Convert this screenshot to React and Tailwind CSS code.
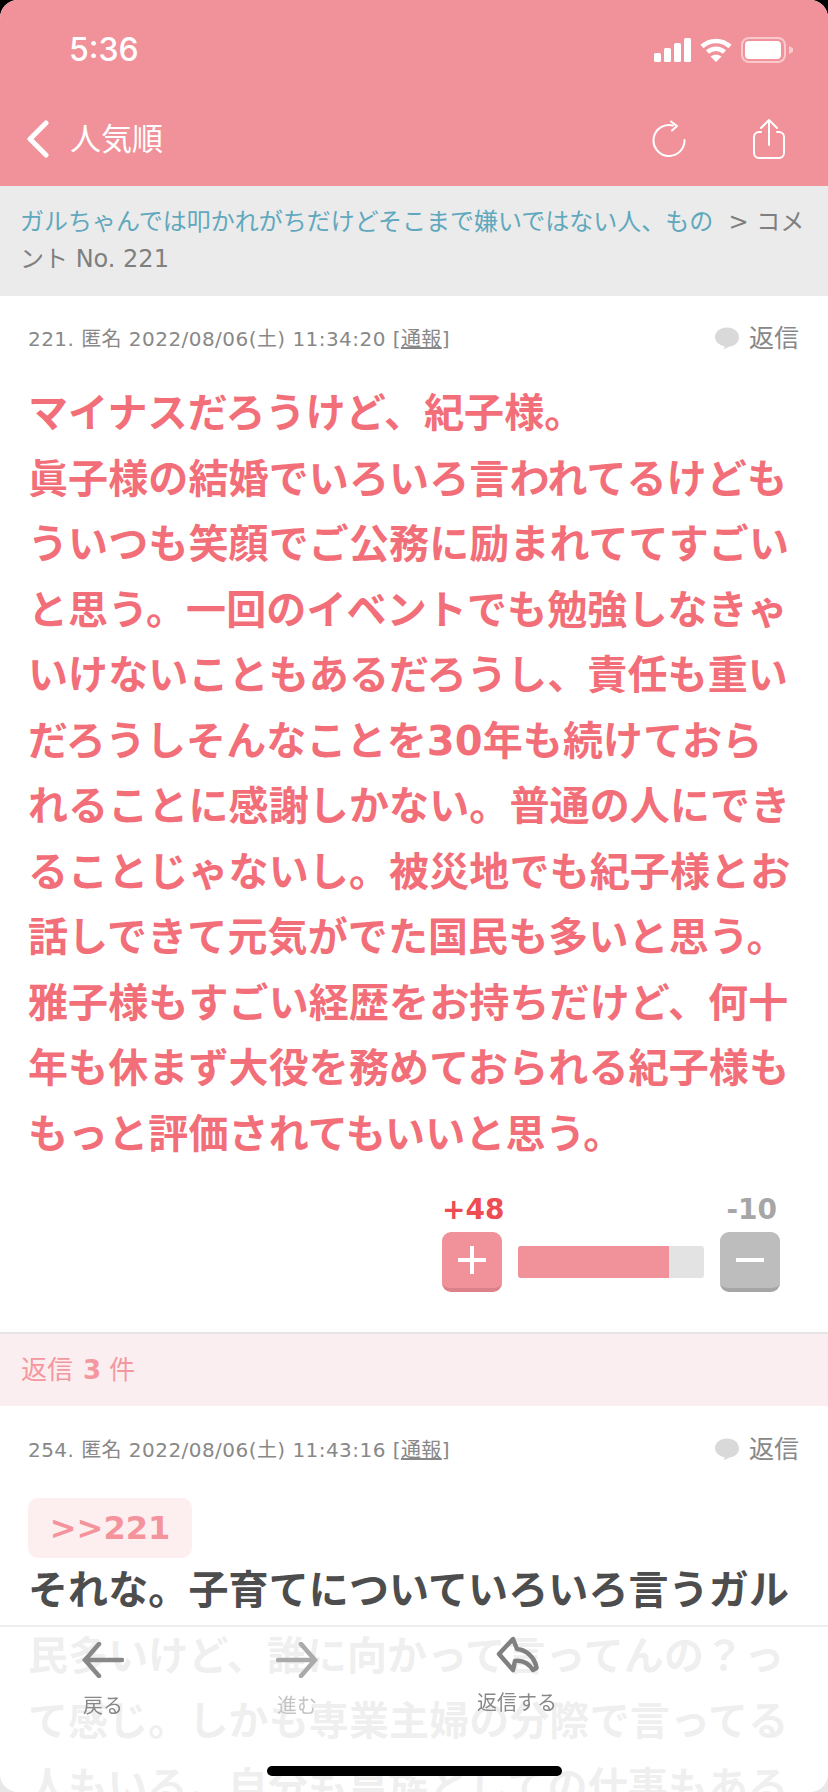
import React from 'react'

const jp = 'font-["DejaVu_Sans","Noto_Sans_CJK_JP",sans-serif]'

const Meta = ({ no, date }) => (
  <div className="flex items-center justify-between h-[28px] pl-[28px] pr-[29px] text-[#888888]">
    <p className="text-[20px] leading-[28px] tracking-[0.45px] pt-[2px]">
      {no}. 匿名 {date} [<span className="underline">通報</span>]
    </p>
    <div className="flex items-center text-[25px] leading-[28px] pt-[2px]">
      <svg width="26" height="26" viewBox="0 0 26 26" className="mr-[9px]">
        <path d="M13 1.5c6.500 0 12 3.800 12 9.800 0 5.600-4.600 8.900-10 9.400l-5 2.600 0.600-3C5 19 1 15.800 1 11 1 5.500 6.500 1.500 13 1.500z" fill="#d9d9d9" />
      </svg>
      返信
    </div>
  </div>
)

const Main = () => (
  <p className="mt-[29px] pl-[28px] pr-[30px] text-[40px] leading-[65.5px] tracking-[0.12px] font-bold text-[#f26f79]">
    マイナスだろうけど、紀子様。<br />
    眞子様の結婚でいろいろ言われてるけどもういつも笑顔でご公務に励まれててすごいと思う。一回のイベントでも勉強しなきゃいけないこともあるだろうし、責任も重いだろうしそんなことを30年も続けておられることに感謝しかない。普通の人にできることじゃないし。被災地でも紀子様とお話しできて元気がでた国民も多いと思う。<br />
    雅子様もすごい経歴をお持ちだけど、何十年も休まず大役を務めておられる紀子様ももっと評価されてもいいと思う。
  </p>
)

const Vote = () => (
  <div className="mt-[25px] pl-[442px]">
    <div className="flex justify-between w-[338px] font-bold text-[28px] leading-[36px]">
      <span className="text-[#ef4b52]">+48</span>
      <span className="text-[#a6a6a6] pr-[3px]">-10</span>
    </div>
    <div className="flex items-center w-[338px] mt-[4px]">
      <div className="flex items-center justify-center w-[60px] h-[60px] rounded-[9px] bg-[#f1929b] border-b-4 border-[#dc818a]">
        <svg width="28" height="28" viewBox="0 0 28 28"><path d="M14 0v28M0 14h28" stroke="#fff" strokeWidth="4" /></svg>
      </div>
      <div className="w-[186px] h-[32px] ml-[16px] rounded-[3px] bg-[#e3e3e3] overflow-hidden">
        <div className="w-[151px] h-full bg-[#f1929b]"></div>
      </div>
      <div className="flex items-center justify-center w-[60px] h-[60px] ml-[16px] rounded-[9px] bg-[#bdbdbd] border-b-4 border-[#a6a6a6]">
        <svg width="28" height="28" viewBox="0 0 28 28"><path d="M0 14h28" stroke="#fff" strokeWidth="4" /></svg>
      </div>
    </div>
  </div>
)

const BottomBar = () => (
  <div className="fixed left-0 right-0 bottom-0 w-[828px] h-[167px] bg-white/[0.91] border-t-2 border-[#eeeeee]">
    <div className="flex">
      <div className="flex flex-col items-center w-[206px] pt-[15px] text-[#888888]">
        <svg width="42" height="36" viewBox="0 0 42 36" fill="none" stroke="#888888" strokeWidth="4.500" strokeLinecap="round">
          <path d="M40 18H3M17 2L3 18l14 16" />
        </svg>
        <span className="mt-[14px] text-[20px] leading-[28px]">戻る</span>
      </div>
      <div className="flex flex-col items-center w-[182px] pt-[15px] text-[#c4c4c4]">
        <svg width="42" height="36" viewBox="0 0 42 36" fill="none" stroke="#aaaaaa" strokeWidth="4.500" strokeLinecap="round">
          <path d="M2 18h37M25 2l14 16-14 16" />
        </svg>
        <span className="mt-[14px] text-[20px] leading-[28px]">進む</span>
      </div>
      <div className="flex flex-col items-center w-[258px] pt-[9px] text-[#888888]">
        <svg width="44" height="38" viewBox="0 0 44 38" fill="none" stroke="#808080" strokeWidth="4.500" strokeLinejoin="round" strokeLinecap="round">
          <path d="M18 3L4 18l14 16 2-9c8-1 14 3 18 9l3.500-2C40 22 32 14 22 13z" />
        </svg>
        <span className="mt-[15px] text-[20px] leading-[28px]">返信する</span>
      </div>
    </div>
    <div className="absolute left-[267px] top-[139px] w-[295px] h-[10px] rounded-full bg-black"></div>
  </div>
)

export default function App() {
  return (
    <div className={`w-[828px] h-[1792px] bg-black overflow-hidden ${jp}`}>
      <div className="relative h-full bg-white rounded-[18px] overflow-hidden">
        {/* Header */}
        <div className="h-[186px] bg-[#f1929b] text-white">
          <div className="flex items-center justify-between h-[100px] pl-[69px] pr-[34px]">
            <span className="text-[32px] font-medium font-['Inter',sans-serif]">5:36</span>
            <div className="flex items-center">
              <svg width="37" height="24" viewBox="0 0 37 24" fill="#fff" className="mr-[9px]">
                <rect x="0" y="15" width="7" height="9" rx="1.500" />
                <rect x="10" y="10" width="7" height="14" rx="1.500" />
                <rect x="20" y="5" width="7" height="19" rx="1.500" />
                <rect x="30" y="0" width="7" height="24" rx="1.500" />
              </svg>
              <svg width="32" height="24" viewBox="0 0 32 24" fill="none" stroke="#fff" strokeWidth="4.500" className="mr-[9px]">
                <path d="M2 8.500c8-7.500 20-7.500 28 0" />
                <path d="M7.500 14c5-4.500 12-4.500 17 0" />
                <path d="M16 24l-5.500-5.500c3-2.500 8-2.500 11 0z" fill="#fff" stroke="none" />
              </svg>
              <svg width="53" height="26" viewBox="0 0 53 26" fill="none">
                <rect x="1" y="1" width="43" height="24" rx="7" stroke="#fff" strokeOpacity="0.5" strokeWidth="2" />
                <rect x="4" y="4" width="36" height="18" rx="4" fill="#fff" />
                <path d="M48 9l4 2v4l-4 2z" fill="#fff" fillOpacity="0.5" />
              </svg>
            </div>
          </div>
          <div className="flex items-center justify-between h-[78px] pl-[26px] pr-[42px]">
            <div className="flex items-center">
              <svg width="24" height="38" viewBox="0 0 24 38" fill="none" stroke="#fff" strokeWidth="5" strokeLinecap="round" strokeLinejoin="round">
                <path d="M20 3L4 19l16 16" />
              </svg>
              <span className="ml-[20px] text-[31px] leading-[40px]">人気順</span>
            </div>
            <div className="flex items-center">
              <svg width="34" height="38" viewBox="0 0 34 38" fill="none" stroke="#fff" strokeWidth="2" strokeLinecap="round" strokeLinejoin="round">
                <path d="M21 5.500A15.500 15.500 0 1 0 32.500 20" />
                <path d="M19 1.500l6 4.500-5 4.500" />
              </svg>
              <svg width="34" height="42" viewBox="0 0 34 42" fill="none" stroke="#fff" strokeWidth="2" strokeLinecap="round" strokeLinejoin="round" className="ml-[66px]">
                <path d="M17 2v25M9 10l8-8 8 8" />
                <path d="M9 14H7a5 5 0 00-5 5v16a5 5 0 005 5h20a5 5 0 005-5V19a5 5 0 00-5-5h-2" />
              </svg>
            </div>
          </div>
        </div>

        {/* Breadcrumb */}
        <div className="h-[110px] pt-[18px] pl-[20px] pr-[15px] bg-[#ebebeb] text-[24px] leading-[37px] text-[#7f7f7f]">
          <span className="text-[#5fa8bd]">ガルちゃんでは叩かれがちだけどそこまで嫌いではない人、もの</span> &nbsp;&gt; コメント No. 221
        </div>

        {/* Comment */}
        <div className="pt-[28px]">
          <Meta no="221" date="2022/08/06(土) 11:34:20" />
          <Main />
          <Vote />
        </div>

        {/* Replies count */}
        <div className="mt-[40px] flex items-center h-[74px] pl-[21px] bg-[#fbeef0] border-t-2 border-[#e6e6e6] text-[26px] text-[#f4979f]">
          返信<b className="ml-[10px] mr-[8px]">3</b>件
        </div>

        {/* Reply */}
        <div className="pt-[29px]">
          <Meta no="254" date="2022/08/06(土) 11:43:16" />
          <div className="mt-[35px] ml-[28px] flex items-center justify-center w-[164px] h-[60px] rounded-[10px] bg-[#fdeef0] font-bold text-[32px] text-[#f4939c]">
            &gt;&gt;221
          </div>
          <p className="pl-[28px] pr-[30px] text-[40px] leading-[65.5px] tracking-[0.12px] font-bold text-[#4d4d4d]">
            それな。子育てについていろいろ言うガル民多いけど、誰に向かって言ってんの？って感じ。しかも専業主婦の分際で言ってる人もいる。自分も皇族としての仕事もある
          </p>
        </div>

        <BottomBar />
      </div>
    </div>
  )
}
